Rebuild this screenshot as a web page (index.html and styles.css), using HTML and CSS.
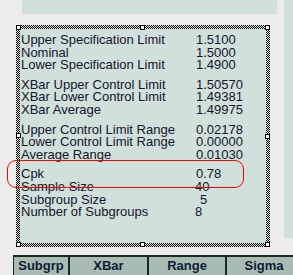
FILE: index.html
```html
<!DOCTYPE html>
<html lang="en">
<head>
    <meta charset="UTF-8">
    <meta name="viewport" content="width=device-width, initial-scale=1.0">
    <title>Capability Report Designer</title>
    <link rel="stylesheet" href="styles.css">
</head>
<body>
    <div class="upper">
        <div class="designer">
            <div class="top-panel"></div>

            <!-- Selected statistics box with sizing handles -->
            <div class="frame">
                <span class="handle h-tl"></span>
                <span class="handle h-tm"></span>
                <span class="handle h-tr"></span>
                <span class="handle h-ml"></span>
                <span class="handle h-mr"></span>
                <span class="handle h-bl"></span>
                <span class="handle h-bm"></span>
                <span class="handle h-br"></span>

                <div class="stats">
                    <div class="group">
                        <div class="row"><span class="label">Upper Specification Limit</span><span class="value">1.5100</span></div>
                        <div class="row"><span class="label">Nominal</span><span class="value">1.5000</span></div>
                        <div class="row"><span class="label">Lower Specification Limit</span><span class="value">1.4900</span></div>
                    </div>
                    <div class="group">
                        <div class="row"><span class="label">XBar Upper Control Limit</span><span class="value">1.50570</span></div>
                        <div class="row"><span class="label">XBar Lower Control Limit</span><span class="value">1.49381</span></div>
                        <div class="row"><span class="label">XBar Average</span><span class="value">1.49975</span></div>
                    </div>
                    <div class="group">
                        <div class="row"><span class="label">Upper Control Limit Range</span><span class="value">0.02178</span></div>
                        <div class="row"><span class="label">Lower Control Limit Range</span><span class="value">0.00000</span></div>
                        <div class="row"><span class="label">Average Range</span><span class="value">0.01030</span></div>
                    </div>
                    <div class="group">
                        <div class="row"><span class="label">Cpk</span><span class="value">0.78</span></div>
                        <div class="row"><span class="label">Sample Size</span><span class="value shift-left">40</span></div>
                        <div class="row"><span class="label">Subgroup Size</span><span class="value shift-right">5</span></div>
                        <div class="row"><span class="label">Number of Subgroups</span><span class="value shift-left">8</span></div>
                    </div>
                </div>
            </div>
        </div>
        <div class="side-strip"></div>
    </div>

    <!-- Data grid column headers -->
    <div class="grid-header">
        <div class="col col-subgrp">Subgrp</div>
        <div class="col col-xbar">XBar</div>
        <div class="col col-range">Range</div>
        <div class="col col-sigma">Sigma</div>
    </div>

    <!-- Red annotation around Cpk -->
    <div class="highlight"></div>
</body>
</html>
```

FILE: styles.css
```css
body {
    margin: 0;
    background-color: #ececec;
    font-family: "Liberation Sans", Arial, sans-serif;
    width: 293px;
    height: 275px;
    overflow: hidden;
    position: relative;
}
.upper {
    display: flex;
    align-items: flex-start;
    justify-content: space-between;
}
.designer {
    width: 277px;
}
.top-panel {
    margin-left: 22px;
    height: 14px;
    background-color: #d0e0da;
}
.side-strip {
    width: 9px;
    height: 238px;
    background-color: #d0e0da;
}
.frame {
    position: relative;
    box-sizing: border-box;
    margin: 11px 0 0 16px;
    width: 254px;
    height: 222px;
    padding: 4px;
    /* dotted selection border */
    background: repeating-conic-gradient(#000 0 25%, #e6e6e6 0 50%) 0 0 / 2px 2px;
}
.handle {
    position: absolute;
    box-sizing: border-box;
    width: 5px;
    height: 5px;
    border: 1px solid #000;
    background-color: #fff;
    z-index: 1;
}
.h-tl { left: 0; top: 0; }
.h-tm { left: 124px; top: 0; }
.h-tr { right: 0; top: 0; }
.h-ml { left: 0; top: 108px; }
.h-mr { right: 0; top: 109px; }
.h-bl { left: 0; bottom: 0; }
.h-bm { left: 124px; bottom: 0; }
.h-br { right: 0; bottom: 0; }
.stats {
    box-sizing: border-box;
    height: 100%;
    padding: 5px 0 0 1px;
    background-color: #d0e0da;
    color: #14142e;
    font-size: 13px;
    line-height: 12.6px;
}
.group + .group {
    margin-top: 7px;
}
.row {
    display: flex;
    white-space: nowrap;
}
.label {
    width: 175px;
    flex-shrink: 0;
}
.shift-left {
    margin-left: -1px;
}
.shift-right {
    margin-left: 4px;
}
.grid-header {
    display: flex;
    margin: 8px 0 0 13px;
}
.col {
    box-sizing: border-box;
    flex-shrink: 0;
    height: 22px;
    border: 1px solid #1b2924;
    border-top-width: 2px;
    background-color: #a9bcb4;
    color: #0c1c38;
    font-size: 13px;
    font-weight: bold;
    line-height: 17px;
    text-align: center;
}
.col-subgrp { width: 56px; }
.col-xbar { width: 79px; }
.col-range { width: 78px; }
.col-sigma { width: 76px; }
.highlight {
    position: absolute;
    box-sizing: border-box;
    left: 7px;
    top: 160px;
    width: 237px;
    height: 28px;
    border: 1px solid #ff0000;
    border-radius: 9px;
}
```
